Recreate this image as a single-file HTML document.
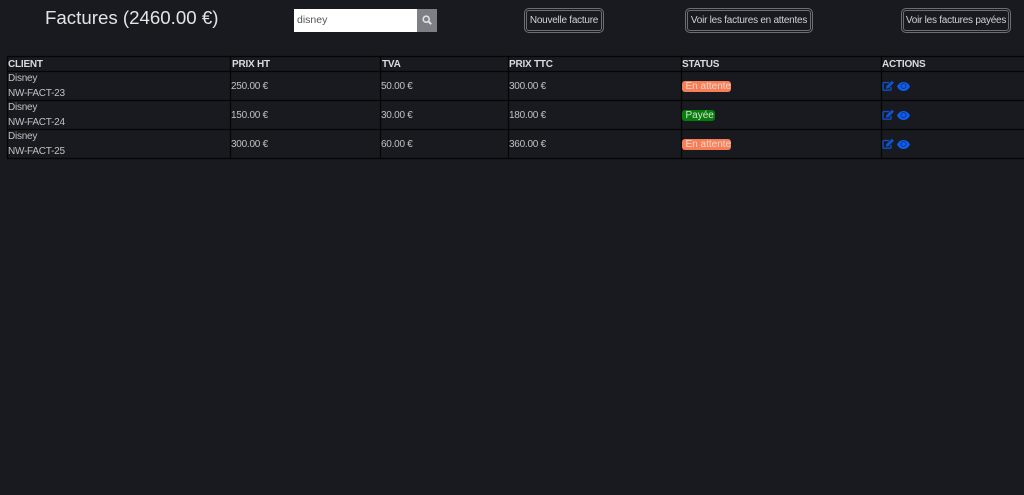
<!DOCTYPE html>
<html lang="fr"><head><meta charset="utf-8"><title>Factures</title>
<style>
*{box-sizing:border-box}
html,body{margin:0;padding:0;width:1024px;height:495px;overflow:hidden;background:#191a1f;color:#e4e6ea;font-family:"Liberation Sans",sans-serif}
.a{position:absolute;white-space:nowrap}
h1{margin:0;left:45px;top:6px;font-size:18.7px;line-height:24px;font-weight:400;color:#e2e4e6}
.search{left:294px;top:9px;width:123px;height:23px;background:#fff;color:#555;font-size:10.5px;line-height:22px;padding-left:3px}
.sb{left:417px;top:9px;width:20px;height:23px;background:#7c8086}
.btn{top:8px;height:25px;border:1px solid #6c6e72;border-radius:5px;font-size:10px;letter-spacing:-.25px;padding-top:1px;line-height:22px;text-align:center;color:#d0d2d5;box-shadow:inset 0 0 0 1px #191a1f,inset 0 0 0 2px #6c6e72}
.l{position:absolute;background:#050506;box-shadow:0 0 1px rgba(0,0,0,.7)}
.t{position:absolute;font-size:10px;letter-spacing:-.25px;line-height:14px;white-space:nowrap;color:#bfc1c5}
.th{font-weight:700;letter-spacing:-.22px;color:#d8dbdf;top:58px}
.badge{position:absolute;height:11px;border-radius:3px;font-size:10px;line-height:11px;color:#f2d8cc;padding-left:3.5px;white-space:nowrap}
.o{background:#f87e58;width:49px;left:682px}
.g{background:#087c0c;width:33px;left:682px;color:#cfe6cf}
svg{position:absolute;overflow:visible}
</style></head><body>
<h1 class="a">Factures (2460.00 €)</h1>
<div class="a search">disney</div>
<div class="a sb"><svg style="left:5px;top:6px" width="10" height="10" viewBox="0 0 10 10"><circle cx="4.2" cy="4.2" r="3" fill="none" stroke="#e0e1e3" stroke-width="1.6"/><path d="M6.5 6.5L9.2 9.2" stroke="#e0e1e3" stroke-width="2"/></svg></div>
<div class="a btn" style="left:524px;width:80px">Nouvelle facture</div>
<div class="a btn" style="left:685px;width:128px">Voir les factures en attentes</div>
<div class="a btn" style="left:901px;width:110px">Voir les factures payées</div>

<div class="l" style="left:7px;top:56px;width:1017px;height:1px"></div>
<div class="l" style="left:7px;top:71px;width:1017px;height:1px"></div>
<div class="l" style="left:7px;top:100px;width:1017px;height:1px"></div>
<div class="l" style="left:7px;top:129px;width:1017px;height:1px"></div>
<div class="l" style="left:7px;top:158px;width:1017px;height:1px"></div>
<div class="l" style="left:7px;top:56px;width:1px;height:103px"></div>
<div class="l" style="left:230px;top:56px;width:1px;height:103px"></div>
<div class="l" style="left:380px;top:56px;width:1px;height:103px"></div>
<div class="l" style="left:508px;top:56px;width:1px;height:103px"></div>
<div class="l" style="left:681px;top:56px;width:1px;height:103px"></div>
<div class="l" style="left:881px;top:56px;width:1px;height:103px"></div>

<div class="t th" style="left:8px">CLIENT</div>
<div class="t th" style="left:232px">PRIX HT</div>
<div class="t th" style="left:382px">TVA</div>
<div class="t th" style="left:509px">PRIX TTC</div>
<div class="t th" style="left:682px">STATUS</div>
<div class="t th" style="left:882px">ACTIONS</div>

<div class="t" style="left:8px;top:72px">Disney</div><div class="t" style="left:8px;top:87px">NW-FACT-23</div>
<div class="t" style="left:231px;top:80px">250.00 €</div><div class="t" style="left:381px;top:80px">50.00 €</div><div class="t" style="left:509px;top:80px">300.00 €</div>
<div class="badge o" style="top:81px">En attente</div>

<div class="t" style="left:8px;top:101px">Disney</div><div class="t" style="left:8px;top:116px">NW-FACT-24</div>
<div class="t" style="left:231px;top:109px">150.00 €</div><div class="t" style="left:381px;top:109px">30.00 €</div><div class="t" style="left:509px;top:109px">180.00 €</div>
<div class="badge g" style="top:110px">Payée</div>

<div class="t" style="left:8px;top:130px">Disney</div><div class="t" style="left:8px;top:145px">NW-FACT-25</div>
<div class="t" style="left:231px;top:138px">300.00 €</div><div class="t" style="left:381px;top:138px">60.00 €</div><div class="t" style="left:509px;top:138px">360.00 €</div>
<div class="badge o" style="top:139px">En attente</div>

<svg style="left:882px;top:80px" width="32" height="12" viewBox="0 0 32 12"><path d="M7 2.6H2Q1 2.6 1 3.6V9.2Q1 10.2 2 10.2H8Q9 10.2 9 9.2V7" fill="none" stroke="#0d50c8" stroke-width="1.4"/><path d="M4.2 6.3L9.8.8L12 2.8L6.4 8.4L4 8.8Z" fill="#0d52d0"/><path d="M15 6.5C18 .5 25 .5 28 6.5C25 12.5 18 12.5 15 6.5Z" fill="#0d5ef0"/><circle cx="21.5" cy="6" r="2.9" fill="#12306f"/><circle cx="21.5" cy="6" r="2" fill="#0d5ef0"/></svg>
<svg style="left:882px;top:109px" width="32" height="12" viewBox="0 0 32 12"><path d="M7 2.6H2Q1 2.6 1 3.6V9.2Q1 10.2 2 10.2H8Q9 10.2 9 9.2V7" fill="none" stroke="#0d50c8" stroke-width="1.4"/><path d="M4.2 6.3L9.8.8L12 2.8L6.4 8.4L4 8.8Z" fill="#0d52d0"/><path d="M15 6.5C18 .5 25 .5 28 6.5C25 12.5 18 12.5 15 6.5Z" fill="#0d5ef0"/><circle cx="21.5" cy="6" r="2.9" fill="#12306f"/><circle cx="21.5" cy="6" r="2" fill="#0d5ef0"/></svg>
<svg style="left:882px;top:138px" width="32" height="12" viewBox="0 0 32 12"><path d="M7 2.6H2Q1 2.6 1 3.6V9.2Q1 10.2 2 10.2H8Q9 10.2 9 9.2V7" fill="none" stroke="#0d50c8" stroke-width="1.4"/><path d="M4.2 6.3L9.8.8L12 2.8L6.4 8.4L4 8.8Z" fill="#0d52d0"/><path d="M15 6.5C18 .5 25 .5 28 6.5C25 12.5 18 12.5 15 6.5Z" fill="#0d5ef0"/><circle cx="21.5" cy="6" r="2.9" fill="#12306f"/><circle cx="21.5" cy="6" r="2" fill="#0d5ef0"/></svg>
</body></html>
